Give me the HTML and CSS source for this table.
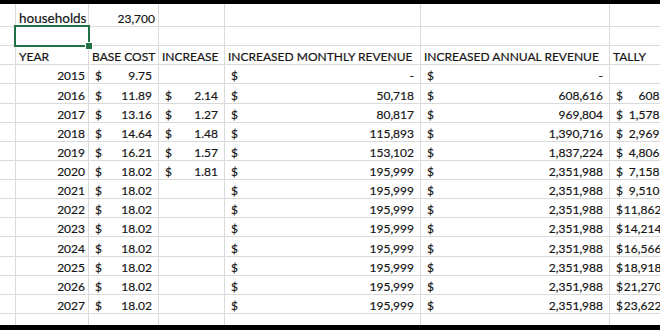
FILE: index.html
```html
<!DOCTYPE html>
<html lang="en">
<head>
    <meta charset="UTF-8">
    <meta name="viewport" content="width=device-width, initial-scale=1.0">
    <title>Revenue Sheet</title>
    <link rel="stylesheet" href="styles.css">
</head>
<body>

    <!-- Sheet -->
    <div class="sheet">
        <div class="row first">
            <div class="cell"></div>
            <div class="cell label">households</div>
            <div class="cell num">23,700</div>
            <div class="cell"></div>
            <div class="cell"></div>
            <div class="cell"></div>
            <div class="cell"></div>
        </div>

        <div class="row">
            <div class="cell"></div>
            <div class="cell selected">
                <div class="sel"><span class="handle"></span></div>
            </div>
            <div class="cell"></div>
            <div class="cell"></div>
            <div class="cell"></div>
            <div class="cell"></div>
            <div class="cell"></div>
        </div>

        <div class="row head">
            <div class="cell"></div>
            <div class="cell">YEAR</div>
            <div class="cell">BASE COST</div>
            <div class="cell">INCREASE</div>
            <div class="cell">INCREASED MONTHLY REVENUE</div>
            <div class="cell">INCREASED ANNUAL REVENUE</div>
            <div class="cell">TALLY</div>
        </div>

        <div id="rows"></div>
    </div>

    <script>
        const data = [
            [2015, "9.75", "", "-", "-", ""],
            [2016, "11.89", "2.14", "50,718", "608,616", "608,616"],
            [2017, "13.16", "1.27", "80,817", "969,804", "1,578,420"],
            [2018, "14.64", "1.48", "115,893", "1,390,716", "2,969,136"],
            [2019, "16.21", "1.57", "153,102", "1,837,224", "4,806,360"],
            [2020, "18.02", "1.81", "195,999", "2,351,988", "7,158,348"],
            [2021, "18.02", "", "195,999", "2,351,988", "9,510,336"],
            [2022, "18.02", "", "195,999", "2,351,988", "11,862,324"],
            [2023, "18.02", "", "195,999", "2,351,988", "14,214,312"],
            [2024, "18.02", "", "195,999", "2,351,988", "16,566,300"],
            [2025, "18.02", "", "195,999", "2,351,988", "18,918,288"],
            [2026, "18.02", "", "195,999", "2,351,988", "21,270,276"],
            [2027, "18.02", "", "195,999", "2,351,988", "23,622,264"]
        ];

        // accounting cell: "$" on the left, amount on the right
        function money(value) {
            if (!value) return '<div class="cell"></div>';
            const tight = value.length > 9 ? " tight" : "";
            return '<div class="cell acct' + tight + '"><span>$</span><span>' + value + '</span></div>';
        }

        let html = "";
        data.forEach((r) => {
            html += '<div class="row">' +
                '<div class="cell"></div>' +
                '<div class="cell num">' + r[0] + '</div>' +
                money(r[1]) + money(r[2]) + money(r[3]) + money(r[4]) + money(r[5]) +
                '</div>';
        });
        // one empty row below the data
        html += '<div class="row">' + '<div class="cell"></div>'.repeat(7) + '</div>';
        document.getElementById("rows").innerHTML = html;
    </script>
</body>
</html>
```

FILE: styles.css
```css
/* General Reset */
* {
    margin: 0;
    padding: 0;
    box-sizing: border-box;
}

body {
    background: #000;
    height: 330px;
    overflow: hidden;
    font-family: 'Lato', 'Liberation Sans', sans-serif;
    font-size: 12px;
    color: #161616;
    -webkit-text-stroke: 0.2px #161616;
}

/* Sheet */
.sheet {
    margin-top: 4px;
    height: 321px;
    background: #fff;
    overflow: hidden;
}

.row {
    display: grid;
    grid-template-columns: 16px 73px 70px 66px 196px 189px 80px;
    height: 19.14px;
}

.row.first {
    height: 23px;
}

.cell {
    display: flex;
    align-items: flex-end;
    padding: 0 3px;
    line-height: 14px;
    border-right: 1px solid #dadada;
    border-bottom: 1px solid #dadada;
    white-space: nowrap;
    overflow: hidden;
}

.label {
    font-size: 13.5px;
    padding-bottom: 1px;
}

.num {
    justify-content: flex-end;
}

.acct {
    justify-content: space-between;
    padding: 0 6px;
}

.acct.tight {
    padding-right: 4px;
}

/* Selected cell */
.selected {
    position: relative;
    overflow: visible;
}

.sel {
    position: absolute;
    left: -2px;
    top: -2px;
    right: -2px;
    bottom: -2px;
    border: 2px solid #217346;
    z-index: 2;
}

.handle {
    position: absolute;
    right: -4px;
    bottom: -4px;
    width: 6px;
    height: 6px;
    background: #217346;
    box-shadow: 0 0 0 1px #fff;
}
```
